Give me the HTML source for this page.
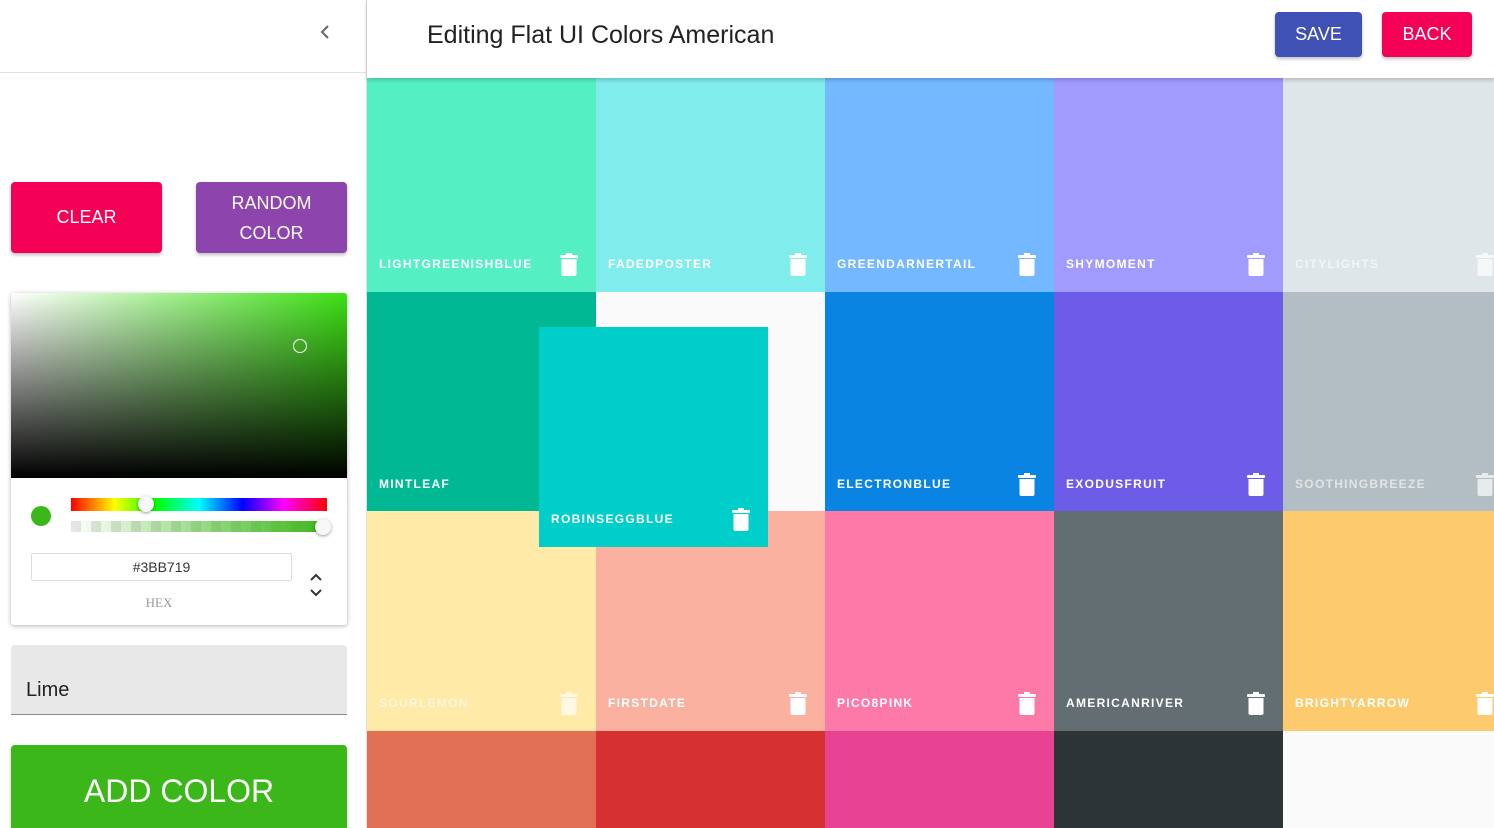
<!DOCTYPE html>
<html style="height:828px;overflow:hidden"><head><meta charset="utf-8"><style>
*{box-sizing:border-box;margin:0;padding:0}
body{width:1494px;height:828px;overflow:hidden;font-family:"Liberation Sans",Arial,sans-serif;background:#fafafa}
#w{position:relative;width:1494px;height:828px;overflow:hidden}
.side{position:absolute;left:0;top:0;width:367px;height:828px;background:#fff;border-right:1px solid #e0e0e0}
.sidetop{height:73px;border-bottom:1px solid #e0e0e0;position:relative}
.btn{position:absolute;color:#fff;display:flex;align-items:center;justify-content:center;text-align:center;border-radius:4px;box-shadow:0 2px 3px rgba(0,0,0,.25);font-size:18px}
.hdr{position:absolute;left:367px;top:0;right:0;height:78px;background:#fff;box-shadow:0 2px 4px rgba(0,0,0,.2);z-index:3}
.box{position:absolute;width:229px;height:220px}
.lab{position:absolute;left:12px;bottom:21px;font-size:12px;letter-spacing:1.3px;color:#fff;font-weight:bold}
.tr{position:absolute;right:18px;bottom:16px}
</style></head><body><div id="w">
<div class="side">
 <div class="sidetop"><svg style="position:absolute;left:318px;top:24px" width="14" height="16" viewBox="0 0 14 16"><path d="M10 2 L4 8 L10 14" fill="none" stroke="#666" stroke-width="2"/></svg></div>
 <div class="btn" style="left:11px;top:182px;width:151px;height:71px;background:#f50057">CLEAR</div>
 <div class="btn" style="left:196px;top:182px;width:151px;height:71px;background:#8e44ad;line-height:30px">RANDOM<br>COLOR</div>
 <div style="position:absolute;left:11px;top:293px;width:336px;height:332px;background:#fff;border-radius:3px;box-shadow:0 1px 5px rgba(0,0,0,.3);overflow:hidden">
  <div style="height:185px;background:linear-gradient(to top,#000,rgba(0,0,0,0)),linear-gradient(to right,#fff,#3de014)"></div>
  <div style="position:absolute;left:282px;top:46px;width:14px;height:14px;border:1.5px solid #fff;border-radius:50%"></div>
  <div style="position:absolute;left:20px;top:213px;width:20px;height:20px;border-radius:50%;background:#3bb719"></div>
  <div style="position:absolute;left:60px;top:205px;width:256px;height:13px;background:linear-gradient(to right,#f00,#ff0 17%,#0f0 33%,#0ff 50%,#00f 67%,#f0f 83%,#f00)"></div>
  <div style="position:absolute;left:127px;top:203px;width:16px;height:16px;border-radius:50%;background:#f8f8f8;box-shadow:0 1px 3px rgba(0,0,0,.4)"></div>
  <div style="position:absolute;left:60px;top:228px;width:256px;height:11px;background:linear-gradient(to right,rgba(59,183,25,0),#3bb719),repeating-linear-gradient(90deg,#e6e6e6 0 10px,#fff 10px 20px)"></div>
  <div style="position:absolute;left:304px;top:226px;width:16px;height:16px;border-radius:50%;background:#f8f8f8;box-shadow:0 1px 3px rgba(0,0,0,.4)"></div>
  <div style="position:absolute;left:20px;top:260px;width:261px;height:28px;border:1px solid #ddd;border-radius:2px;text-align:center;line-height:26px;font-size:14px;color:#333">#3BB719</div>
  <div style="position:absolute;left:0;width:296px;top:302px;text-align:center;font-family:'Liberation Serif',serif;font-size:13px;color:#999">HEX</div>
  <svg style="position:absolute;left:298px;top:280px" width="14" height="24" viewBox="0 0 14 24"><path d="M2 7 L7 2 L12 7 M2 17 L7 22 L12 17" fill="none" stroke="#333" stroke-width="2"/></svg>
 </div>
 <div style="position:absolute;left:11px;top:645px;width:336px;height:70px;background:#e8e8e8;border-bottom:1px solid #888;border-radius:4px 4px 0 0"><span style="position:absolute;left:15px;top:34px;font-size:20px;color:#222">Lime</span></div>
 <div class="btn" style="left:11px;top:745px;width:336px;height:83px;background:#3bb719;font-size:32px;align-items:flex-start;padding-top:28px;border-radius:4px 4px 0 0">ADD COLOR</div>
</div>
<div class="hdr">
 <div style="position:absolute;left:60px;top:21px;font-size:25px;color:#222">Editing Flat UI Colors American</div>
 <div class="btn" style="left:908px;top:12px;width:87px;height:45px;background:#3f51b5">SAVE</div>
 <div class="btn" style="left:1015px;top:12px;width:90px;height:45px;background:#f50057">BACK</div>
</div>
<div id="g"></div>
</div>
<script>
var C=[["#55efc4","LIGHTGREENISHBLUE",1],["#81ecec","FADEDPOSTER",1],["#74b9ff","GREENDARNERTAIL",1],["#a29bfe","SHYMOMENT",1],["#dfe6e9","CITYLIGHTS",0],
["#00b894","MINTLEAF",1],null,["#0984e3","ELECTRONBLUE",1],["#6c5ce7","EXODUSFRUIT",1],["#b2bec3","SOOTHINGBREEZE",0],
["#ffeaa7","SOURLEMON",0],["#fab1a0","FIRSTDATE",1],["#fd79a8","PICO8PINK",1],["#636e72","AMERICANRIVER",1],["#fdcb6e","BRIGHTYARROW",1],
["#e17055","",1],["#d63031","",1],["#e84393","",1],["#2d3436","",1],null];
var tr='<svg class="tr" width="18" height="23" viewBox="0 0 18 23"><rect x="0" y="2" width="18" height="3" rx="1" fill="#fff"/><rect x="6" y="0" width="6" height="3" fill="#fff"/><path d="M1.5 6 H16.5 V21 a2 2 0 0 1 -2 2 H3.5 a2 2 0 0 1 -2 -2Z" fill="#fff"/></svg>';
var h='';C.forEach(function(c,i){if(!c)return;var x=367+(i%5)*229,y=72+Math.floor(i/5)*219.5;
h+='<div class="box" style="left:'+x+'px;top:'+y+'px;background:'+c[0]+(y>700?';height:'+(828-y)+'px':'')+'">'+(c[1]?'<div class="lab" style="opacity:'+(c[2]?1:.6)+'">'+c[1]+'</div>'+tr.replace('<svg','<svg style="opacity:'+(c[2]?1:.7)+'"'):'')+'</div>';});
h+='<div class="box" style="left:539px;top:327px;height:220px;background:#00cec9;z-index:2"><div class="lab">ROBINSEGGBLUE</div>'+tr+'</div>';
document.getElementById('g').innerHTML=h;
</script>
</body></html>
